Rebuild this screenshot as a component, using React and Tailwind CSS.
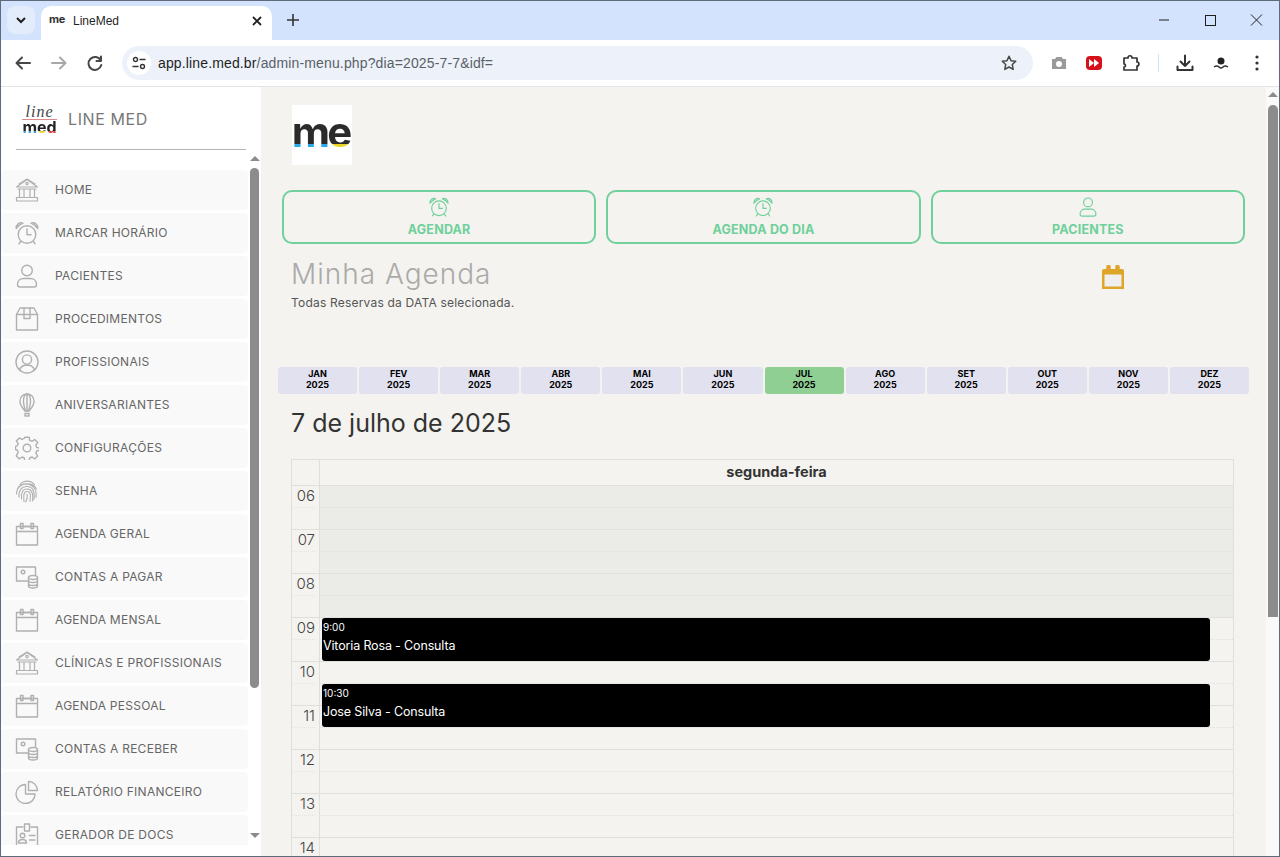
import React from "react";

const S = ({ children, size = 24, color = "#b0b0b0", sw = 1.4, className = "" }) => (
  <svg width={size} height={size} viewBox="0 0 24 24" fill="none" stroke={color} strokeWidth={sw} strokeLinecap="round" strokeLinejoin="round" className={className}>
    {children}
  </svg>
);

const Bank = () => (<S sw={1.2}><path d="M1.500 9 12 1.500 22.500 9z" /><path d="M4 5.900 12 .9l8 5" /><circle cx="12" cy="5.600" r="1.200" /><path d="M3 11h18M4.500 11v8M9 11v8M15 11v8M19.500 11v8M1.500 19.500h21v3.500h-21z" /></S>);
const Clock = ({ color, size }) => (<S color={color} size={size} sw={1.4}><circle cx="12" cy="13.500" r="8.800" /><path d="M12 8v5.700h4M5.500 20.500 4 22.800M18.500 20.500 20 22.800" /><path d="M1.200 7.500C.8 3.500 4.500.5 8 2.200 5 3.200 3 5 1.200 7.500zM22.800 7.500C23.200 3.500 19.500.5 16 2.200 19 3.200 21 5 22.800 7.500z" /></S>);
const Person = ({ color, size }) => (<S color={color} size={size} sw={1.4}><circle cx="12" cy="6.500" r="5.300" /><path d="M2.500 20.500c0-4 3-6 6-6h7c3 0 6 2 6 6 0 1.600-1 2.500-2.500 2.500H5c-1.500 0-2.500-.9-2.500-2.500z" /></S>);
const Box = () => (<S><path d="M1.500 7.500 5 1h14l3.500 6.500V23h-21z" /><path d="M1.500 7.500h21M9 1v10.500h6V1" /></S>);
const Profile = () => (<S><circle cx="12" cy="12" r="11" /><circle cx="12" cy="9.500" r="4.600" /><path d="M4.500 20c1-3.200 3.600-4.500 5.500-4.800h4c2 .3 4.500 1.600 5.500 4.800" /></S>);
const Balloon = () => (<S><path d="M12 1C6.800 1 5 5 5 8.500c0 4.500 4 8 5 9.500h4c1-1.500 5-5 5-9.500C19 5 17.200 1 12 1z" /><path d="M12 1c-2.500 0-3.500 4-3.500 7.500 0 4 1.500 7.500 2 9.500M12 1c2.500 0 3.500 4 3.500 7.500 0 4-1.500 7.500-2 9.500M12 1v17" /><path d="M10 20.500h4V23h-4z" /></S>);
const Gear = () => (<S><path d="M9.800 1.500h4.400l.5 3.200 2.300 1 2.700-1.900 3 3-1.900 2.700 1 2.300 2.700.5v2.400l-2.700.5-1 2.300 1.900 2.700-3 3-2.700-1.900-2.300 1-.5 2.700H9.800l-.5-2.700-2.300-1-2.700 1.900-3-3L3.200 16.600l-1-2.300-1.700-.5V10.700l1.700-.5 1-2.300-1.900-2.700 3-3L7 3.600l2.300-1z" transform="translate(0 -.300)" /><circle cx="12" cy="12" r="3.800" /></S>);
const Finger = () => (<S sw={1.1}><path d="M5 5.500C9 1 15.500 1 19.500 5.500M2.500 9.500C6 3.500 18 3 21.500 10M1.500 15c0-9 9-11 13-9.500 5 2 7.500 6 6.500 13M4 18c-.5-7 3-10.500 8-10.500s8 4 7 13M6.500 20c-.5-6 1-10 5.500-10s6.500 4 5.500 12M9 22.500c0-3-1.500-10 3-10s3.500 5 3 10M12 15c.5 3 0 6-1.500 8" /></S>);
const Cal = () => (<S><path d="M1.500 4.500h21v18.500h-21zM1.500 9.500h21" /><path d="M5.500 1.500h2.500v5H5.500zM16 1.500h2.500v5H16zM8 4.500h8" /></S>);
const Money = () => (<S><path d="M13 16H1.500V2h19v8" /><circle cx="8" cy="7" r="1.800" /><ellipse cx="18" cy="12.500" rx="4.500" ry="2" /><path d="M13.500 12.500v8.500c0 1.100 2 2 4.500 2s4.500-.9 4.500-2v-8.500M13.500 15.500c0 1.100 2 2 4.500 2s4.500-.9 4.500-2M13.500 18.500c0 1.100 2 2 4.500 2s4.500-.9 4.500-2" /></S>);
const Pie = () => (<S sw={1.4}><path d="M10.500 4.500C5 4.500 1 9 1 14s4 9.500 9.500 9.500 9.500-4 9.500-9.500h-9.500z" /><path d="M13.500 1.500c5 0 9 4 9 9h-9z" /></S>);
const Doc = () => (<S><path d="M8 4H1.500v19h21V4H16" /><path d="M9.500 1h5v7h-5z" /><circle cx="7.500" cy="12.500" r="2.300" /><path d="M3.500 20c0-2.500 2-3.500 4-3.500s4 1 4 3.500zM14.500 12.500H20M14.500 17H20" /></S>);

const menu = [
  ["HOME", Bank], ["MARCAR HORÁRIO", Clock], ["PACIENTES", Person], ["PROCEDIMENTOS", Box],
  ["PROFISSIONAIS", Profile], ["ANIVERSARIANTES", Balloon], ["CONFIGURAÇÕES", Gear], ["SENHA", Finger],
  ["AGENDA GERAL", Cal], ["CONTAS A PAGAR", Money], ["AGENDA MENSAL", Cal], ["CLÍNICAS E PROFISSIONAIS", Bank],
  ["AGENDA PESSOAL", Cal], ["CONTAS A RECEBER", Money], ["RELATÓRIO FINANCEIRO", Pie], ["GERADOR DE DOCS", Doc],
];
const months = ["JAN", "FEV", "MAR", "ABR", "MAI", "JUN", "JUL", "AGO", "SET", "OUT", "NOV", "DEZ"];
const hours = ["06", "07", "08", "09", "10", "11", "12", "13", "14"];

const ChromeIcon = ({ children, className = "", sw = 2, color = "#474747" }) => (
  <svg width="20" height="20" viewBox="0 0 20 20" fill="none" stroke={color} strokeWidth={sw} strokeLinecap="round" strokeLinejoin="round" className={className}>{children}</svg>
);

function Browser() {
  return (
    <div className="shrink-0">
      <div className="h-10 bg-[#d3e3fd] border-t border-[#5f6b7a] flex items-start relative">
        <div className="ml-[6px] mt-[5px] w-[28px] h-[28px] rounded-lg bg-[#e3ecfb] flex items-center justify-center">
          <svg width="10" height="7" viewBox="0 0 10 7" fill="none" stroke="#1f1f1f" strokeWidth="2"><path d="M1 1l4 4 4-4" /></svg>
        </div>
        <div className="ml-[6px] mt-[5px] w-[231px] h-[34px] bg-white rounded-t-[10px] flex items-center pl-[8px] pr-[8px] pb-[4px]">
          <span className="w-[16px] mr-[8px] text-[11px] font-bold leading-none tracking-[-0.3px] text-[#333] -mt-[3px]">me</span>
          <span className="text-[12px] text-[#1f1f1f] font-['Liberation_Sans',sans-serif] flex-1">LineMed</span>
          <svg width="10" height="10" viewBox="0 0 10 10" stroke="#1f1f1f" strokeWidth="1.800" className="mr-[2px]"><path d="M1 1l8 8M9 1l-8 8" /></svg>
        </div>
        <svg width="12" height="12" viewBox="0 0 12 12" stroke="#333" strokeWidth="1.600" className="ml-[15px] mt-[13px]"><path d="M6 0v12M0 6h12" /></svg>
        <div className="ml-auto flex items-center mt-[12px]">
          <svg width="46" height="14" viewBox="0 0 46 14" stroke="#1f1f1f" strokeWidth="1"><path d="M18 7h10" /></svg>
          <svg width="46" height="14" viewBox="0 0 46 14" fill="none" stroke="#1f1f1f" strokeWidth="1"><rect x="18.500" y="2.500" width="10" height="10" /></svg>
          <svg width="46" height="14" viewBox="0 0 46 14" stroke="#1f1f1f" strokeWidth="1"><path d="M18 1.500l11 11M29 1.500l-11 11" /></svg>
        </div>
      </div>
      <div className="h-[46px] bg-white border-b border-[#e3e3e3] flex items-center box-content rounded-tr-lg">
        <div className="w-[121px] flex items-center pl-[12px] gap-[16px]">
          <ChromeIcon><path d="M17 10H4M9 4.500 3.500 10 9 15.500" /></ChromeIcon>
          <ChromeIcon color="#a8a8a8"><path d="M3 10h13M11 4.500l5.500 5.500-5.500 5.500" /></ChromeIcon>
          <ChromeIcon><path d="M15.800 7.500A6.500 6.500 0 1 0 16.300 12M16 3.500v4.500h-4.500" /></ChromeIcon>
        </div>
        <div className="w-[911px] h-[34px] rounded-full bg-[#edf2fa] flex items-center pl-[5px] pr-[15px]">
          <div className="w-[24px] h-[24px] rounded-full bg-white flex items-center justify-center">
            <svg width="14" height="14" viewBox="0 0 14 14" fill="none" stroke="#333" strokeWidth="1.400"><circle cx="3.500" cy="3.500" r="2" /><path d="M7.500 3.500h6M.5 10.500h6" /><circle cx="10.500" cy="10.500" r="2" /></svg>
          </div>
          <span className="ml-[7px] flex-1 text-[14px] tracking-[0.14px] font-['Liberation_Sans',sans-serif] text-[#5b5f66]"><span className="text-[#1f1f1f]">app.line.med.br</span>/admin-menu.php?dia=2025-7-7&amp;idf=</span>
          <svg width="18" height="18" viewBox="0 0 24 24" fill="none" stroke="#474747" strokeWidth="2" strokeLinejoin="round"><path d="M12 3l2.700 5.900 6.300.8-4.600 4.400 1.200 6.400-5.600-3.200-5.600 3.200 1.200-6.400L3 9.700l6.300-.8z" /></svg>
        </div>
        <div className="flex-1 flex items-center pl-[17px]">
          <svg width="18" height="18" viewBox="0 0 18 18" fill="#9a9a9a"><path d="M2 5h3l1.500-2h5L13 5h3v10H2z" /><circle cx="9" cy="10" r="3" fill="#fff" /></svg>
          <div className="ml-[18px] w-[16px] h-[14px] rounded-[4px] bg-[#d5121b] flex items-center justify-center">
            <svg width="10" height="8" viewBox="0 0 10 8" fill="#fff"><path d="M0 0l5 4-5 4zM5 0l5 4-5 4z" /></svg>
          </div>
          <svg width="18" height="18" viewBox="0 0 18 18" fill="none" stroke="#333" strokeWidth="1.700" strokeLinejoin="round" className="ml-[20px]"><path d="M2 4h4c0-3 4-3 4 0h5v4c2.500 0 2.500 4 0 4v4H2v-3c2 0 2-3 0-3z" /></svg>
          <div className="ml-[18px] w-px h-[18px] bg-[#d3e3fd]"></div>
          <ChromeIcon className="ml-[16px]" color="#333"><path d="M10 2.500V13M5.500 8.500 10 13l4.500-4.500M2.500 13.500V17h15v-3.500" /></ChromeIcon>
          <svg width="18" height="12" viewBox="0 0 18 12" className="ml-[17px]"><circle cx="9" cy="4" r="3.500" fill="#222" /><path d="M2 10q3-2 5 0t4 0 5 0" stroke="#333" fill="none" strokeWidth="1.500" /></svg>
          <svg width="4" height="16" viewBox="0 0 4 16" fill="#333" className="ml-[25px]"><circle cx="2" cy="2" r="1.600" /><circle cx="2" cy="8" r="1.600" /><circle cx="2" cy="14" r="1.600" /></svg>
        </div>
      </div>
    </div>
  );
}

const Grad = ({ c, children }) => <span className={`inline-block text-transparent bg-clip-text ${c}`}>{children}</span>;

function Sidebar() {
  return (
    <aside className="w-[260px] shrink-0 bg-white flex flex-col h-full">
      <div className="h-[63px] mx-[15px] border-b border-[#b5b5b5] flex items-center shrink-0 pt-[2px]">
        <div className="w-[35px] ml-[6px] flex flex-col items-center">
          <span className="font-['Liberation_Serif',serif] italic text-[16px] leading-[14px] tracking-[1px] text-[#444] border-b border-[#d88] w-full text-center">line</span>
          <span className="text-[16px] font-bold leading-[14px] font-['Inter',sans-serif] flex">
            <Grad c="bg-[linear-gradient(180deg,#222_82%,#3aa0e0_82%)]">m</Grad>
            <Grad c="bg-[linear-gradient(180deg,#222_82%,#e6d322_82%)]">e</Grad>
            <Grad c="bg-[linear-gradient(180deg,#222_82%,#d9413a_82%)]">d</Grad>
          </span>
        </div>
        <span className="ml-[11px] text-[16px] tracking-[0.6px] text-[#777]">LINE MED</span>
      </div>
      <div className="flex-1 min-h-0 flex pb-[11px]">
        <div className="w-[247px] pt-[20px] flex flex-col gap-[3px] overflow-hidden">
          {menu.map(([label, Icon]) => (
            <div key={label} className="h-[40px] shrink-0 bg-[#f9f9f9] flex items-center pl-[14px] rounded-sm">
              <span className="w-[24px] h-[24px] flex"><Icon /></span>
              <span className="ml-[16px] text-[12px] tracking-[0.27px] text-[#666] whitespace-nowrap">{label}</span>
            </div>
          ))}
        </div>
        <div className="w-[13px] flex flex-col items-center pt-[6px]">
          <div className="w-0 h-0 border-x-[5px] border-x-transparent border-b-[5px] border-b-[#8c8c8c]"></div>
          <div className="w-[9px] h-[520px] mt-[7px] rounded-full bg-[#8c8c8c]"></div>
          <div className="mt-auto mb-[7px] w-0 h-0 border-x-[5px] border-x-transparent border-t-[5px] border-t-[#8c8c8c]"></div>
        </div>
      </div>
    </aside>
  );
}

function ActionButton({ icon: Icon, label }) {
  return (
    <div className="flex-1 h-[54px] border-[2.500px] border-[#6fd09b] rounded-[10px] flex flex-col items-center justify-start pt-[5px]">
      <Icon color="#6fd09b" size={20} />
      <span className="mt-[5px] text-[12.500px] font-bold leading-[15px] text-[#6fd09b] tracking-[0.2px]">{label}</span>
    </div>
  );
}

function Calendar() {
  return (
    <div className="mt-[20px] ml-[291px] w-[943px] border-x border-t border-[#dfdfdb] relative">
      <div className="h-[26px] flex border-b border-[#dfdfdb]">
        <div className="w-[28px] border-r border-[#dfdfdb]"></div>
        <div className="flex-1 flex items-center justify-center text-[14.500px] font-bold text-[#333] pb-[2px]">segunda-feira</div>
      </div>
      {hours.map((h, i) => (
        <div key={h} className="h-[44px] flex border-b border-[#dfdfdb]">
          <div className="w-[28px] shrink-0 border-r border-[#dfdfdb] text-right pr-[4px] text-[15px] leading-[20px] font-light text-[#444]">
            <div className="h-[22px] border-b border-dotted border-[#e4e4e0]">{h}</div>
          </div>
          <div className={`flex-1 ${i < 3 ? "bg-[#ebebe7]" : ""}`}>
            <div className="h-[22px] border-b border-dotted border-[#dfdfdb]"></div>
          </div>
        </div>
      ))}
      <div className="absolute left-[30px] top-[158px] w-[888px] h-[43px] bg-black rounded-[3px] text-white pl-[1px]">
        <div className="text-[10px] leading-[12px] mt-[3px]">9:00</div>
        <div className="text-[12.500px] tracking-[-0.15px] leading-[16px] mt-[5px]">Vitoria Rosa - Consulta</div>
      </div>
      <div className="absolute left-[30px] top-[224px] w-[888px] h-[43px] bg-black rounded-[3px] text-white pl-[1px]">
        <div className="text-[10px] leading-[12px] mt-[3px]">10:30</div>
        <div className="text-[12.500px] tracking-[-0.15px] leading-[16px] mt-[5px]">Jose Silva - Consulta</div>
      </div>
    </div>
  );
}

function Main() {
  return (
    <main className="flex-1 min-w-0 bg-[#f4f3ef] h-full overflow-hidden">
      <div className="w-[1005px] -ml-[261px] pt-[18px]">
        <div className="ml-[292px] w-[60px] h-[60px] bg-white flex items-center justify-center overflow-hidden pb-[6px]">
          <span className="text-[42px] font-bold leading-none flex">
            <Grad c="bg-[linear-gradient(180deg,#2b2b2b_79%,#2aa9ee_79%)]">m</Grad>
            <span className="-ml-[3px] flex"><Grad c="bg-[linear-gradient(180deg,#2b2b2b_79%,#e6d322_79%)]">e</Grad></span>
          </span>
        </div>
        <div className="ml-[282px] w-[963px] mt-[25px] flex gap-[10px]">
          <ActionButton icon={Clock} label="AGENDAR" />
          <ActionButton icon={Clock} label="AGENDA DO DIA" />
          <ActionButton icon={Person} label="PACIENTES" />
        </div>
        <div className="ml-[291px] w-[840px] mt-[13px] flex">
          <div className="flex-1">
            <div className="text-[28px] font-light leading-[34px] text-[#aaaaaa] tracking-[1px]">Minha Agenda</div>
            <div className="text-[12px] tracking-[0.2px] leading-[16px] mt-[4px] text-[#555]">Todas Reservas da DATA selecionada.</div>
          </div>
          <svg width="24" height="26" viewBox="0 0 24 26" className="mt-[8px] mr-[6px]" fill="none">
            <path d="M3 4h18a2 2 0 0 1 2 2v18H1V6a2 2 0 0 1 2-2z" fill="#dda52a" />
            <rect x="3.500" y="9.500" width="17" height="12" fill="#f0eff0" />
            <path d="M6 4V2a1.500 1.500 0 0 1 3 0v3M15 4V2a1.500 1.500 0 0 1 3 0v3" stroke="#dda52a" strokeWidth="1.500" fill="#dda52a" />
          </svg>
        </div>
        <div className="ml-[278px] mt-[56px] grid grid-cols-12 gap-[2px] w-[971px]">
          {months.map((m) => (
            <div key={m} className={`h-[27px] rounded-[3px] flex flex-col items-center justify-center pb-[4px] text-[9px] font-bold leading-[11px] text-black ${m === "JUL" ? "bg-[#8fcf94]" : "bg-[#e1e1ef]"}`}>
              <span>{m}</span>
              <span>2025</span>
            </div>
          ))}
        </div>
        <div className="ml-[291px] mt-[13px] text-[25px] leading-[32px] text-[#333]">7 de julho de 2025</div>
        <Calendar />
      </div>
    </main>
  );
}

function PageScrollbar() {
  return (
    <div className="w-[13px] shrink-0 bg-[#f9f9f9] flex flex-col items-center pt-[5px]">
      <div className="w-0 h-0 border-x-[5px] border-x-transparent border-b-[5px] border-b-[#8c8c8c]"></div>
      <div className="w-[10px] h-[512px] mt-[8px] rounded-t-full rounded-b-sm bg-[#8c8c8c]"></div>
    </div>
  );
}

export default function App() {
  return (
    <div className="w-[1280px] h-[857px] overflow-hidden flex flex-col border-x border-b border-[#5f6b7a] font-['Inter','Open_Sans',sans-serif] bg-white">
      <Browser />
      <div className="flex-1 min-h-0 flex">
        <Sidebar />
        <Main />
        <PageScrollbar />
      </div>
    </div>
  );
}
